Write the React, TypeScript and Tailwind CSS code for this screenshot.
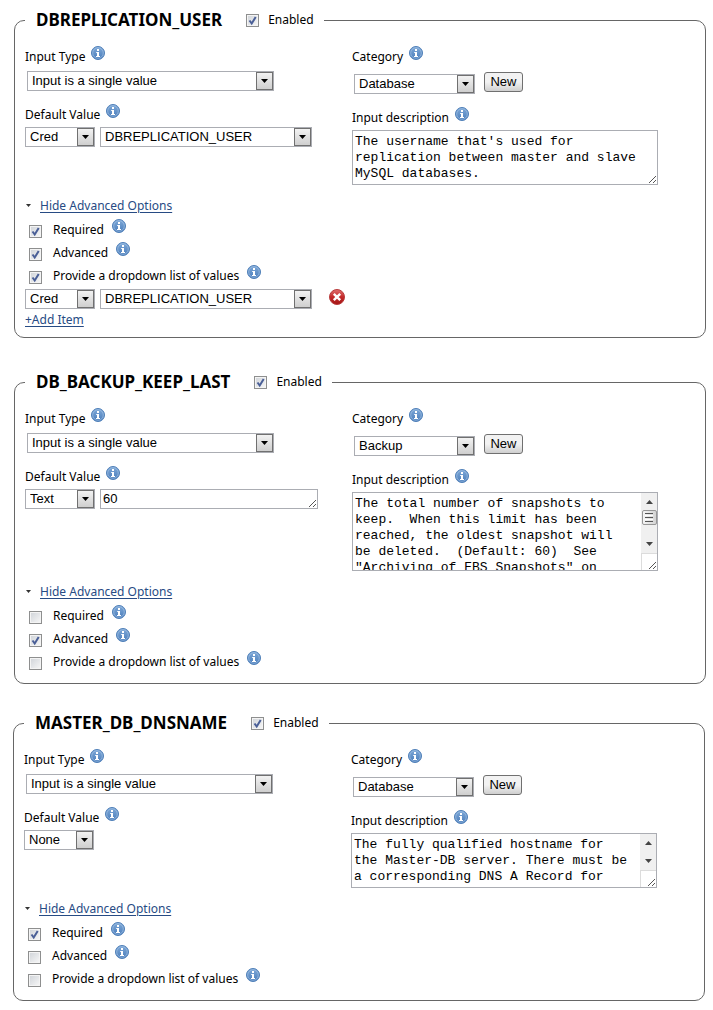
import { useId, type ReactNode } from "react";

type ValueKind = "Cred" | "Text" | "None";

type InputConfig = {
  name: string;
  category: string;
  kind: ValueKind;
  value: string;
  description: string;
  required: boolean;
  advanced: boolean;
  dropdown: boolean;
  scroll: "none" | "thumb" | "arrows";
};

const INPUTS: InputConfig[] = [
  {
    name: "DBREPLICATION_USER",
    category: "Database",
    kind: "Cred",
    value: "DBREPLICATION_USER",
    description: "The username that's used for\nreplication between master and slave\nMySQL databases.",
    required: true,
    advanced: true,
    dropdown: true,
    scroll: "none",
  },
  {
    name: "DB_BACKUP_KEEP_LAST",
    category: "Backup",
    kind: "Text",
    value: "60",
    description:
      'The total number of snapshots to\nkeep.  When this limit has been\nreached, the oldest snapshot will\nbe deleted.  (Default: 60)  See\n"Archiving of EBS Snapshots" on',
    required: false,
    advanced: true,
    dropdown: false,
    scroll: "thumb",
  },
  {
    name: "MASTER_DB_DNSNAME",
    category: "Database",
    kind: "None",
    value: "",
    description: "The fully qualified hostname for\nthe Master-DB server. There must be\na corresponding DNS A Record for",
    required: true,
    advanced: false,
    dropdown: false,
    scroll: "arrows",
  },
];

function InfoIcon() {
  return (
    <svg className="size-[14px] shrink-0" viewBox="0 0 14 14" aria-hidden="true">
      <defs>
        <linearGradient id="info-fill" x1="0" y1="0" x2="0" y2="1">
          <stop offset="0" stopColor="#7fa9d8" />
          <stop offset="1" stopColor="#4a7dbb" />
        </linearGradient>
      </defs>
      <circle cx="7" cy="7" r="6.5" fill="url(#info-fill)" stroke="#4f7fb8" />
      <circle cx="7" cy="7" r="5.3" fill="none" stroke="#a9c6e6" strokeWidth="0.6" />
      <path d="M6 3h2v2H6zM5.2 6H8v4h1v1H5v-1h1V7h-.8z" fill="#fff" />
    </svg>
  );
}

function RemoveIcon() {
  return (
    <svg className="size-4" viewBox="0 0 16 16" aria-hidden="true">
      <defs>
        <linearGradient id="remove-fill" x1="0" y1="0" x2="0" y2="1">
          <stop offset="0" stopColor="#e07070" />
          <stop offset="0.5" stopColor="#c42a2a" />
          <stop offset="1" stopColor="#a31515" />
        </linearGradient>
      </defs>
      <circle cx="8" cy="8" r="7.5" fill="url(#remove-fill)" stroke="#b83c3c" />
      <path d="M4.8 4.8l6.4 6.4M11.2 4.8l-6.4 6.4" stroke="#fff" strokeWidth="2.4" />
    </svg>
  );
}

function Grip() {
  return (
    <svg className="pointer-events-none absolute right-[2px] bottom-[2px] size-[7px]" viewBox="0 0 7 7" aria-hidden="true">
      <path
        d="M0 6h1v1H0zM1 5h1v1H1zM2 4h1v1H2zM3 3h1v1H3zM4 2h1v1H4zM5 1h1v1H5zM6 0h1v1H6zM4 6h1v1H4zM5 5h1v1H5zM6 4h1v1H6z"
        fill="#555"
      />
    </svg>
  );
}

function Select({ label, value, options, className }: { label: string; value: string; options: string[]; className: string }) {
  return (
    <div className={`relative h-5 ${className}`}>
      <select
        aria-label={label}
        defaultValue={value}
        className="block h-5 w-full appearance-none border border-[#abadb3] bg-white pl-1 font-['Liberation_Sans',sans-serif] text-[13px] leading-[18px] text-black"
      >
        {options.map((option) => (
          <option key={option}>{option}</option>
        ))}
      </select>
      <span className="pointer-events-none absolute top-px right-px flex h-[18px] w-[17px] items-center justify-center border border-[#707070] bg-linear-to-b from-[#f2f2f2] to-[#cfcfcf]">
        <svg className="h-1 w-[7px]" viewBox="0 0 7 4" aria-hidden="true">
          <path d="M0 0h7L3.5 4z" fill="#000" />
        </svg>
      </span>
    </div>
  );
}

function Checkbox({ id, checked }: { id: string; checked: boolean }) {
  return (
    <span className="relative block size-[13px] shrink-0">
      <input
        id={id}
        type="checkbox"
        defaultChecked={checked}
        className="peer block size-[13px] appearance-none border border-[#8e8f8f] bg-linear-to-br from-[#cfd3d8] to-[#f8f8f8] shadow-[inset_0_0_0_1px_#f4f4f4]"
      />
      <svg className="pointer-events-none absolute inset-0 hidden size-[13px] peer-checked:block" viewBox="0 0 13 13" aria-hidden="true">
        <path d="M3.5 6.5L5.7 9.5L9.7 3" stroke="#4a5f97" strokeWidth="2" fill="none" />
      </svg>
    </span>
  );
}

function FieldLabel({ htmlFor, children }: { htmlFor?: string; children: ReactNode }) {
  return (
    <div className="flex h-5 items-start gap-[6px]">
      <label htmlFor={htmlFor} className="leading-[22px]">
        {children}
      </label>
      <InfoIcon />
    </div>
  );
}

function OptionRow({ label, checked }: { label: string; checked: boolean }) {
  const id = useId();
  return (
    <li className="flex h-5 items-start pl-1">
      <span className="mr-[11px] pt-[6px]">
        <Checkbox id={id} checked={checked} />
      </span>
      <label htmlFor={id} className="mr-2 leading-[22px]">
        {label}
      </label>
      <InfoIcon />
    </li>
  );
}

function ScrollBar({ thumb }: { thumb: boolean }) {
  return (
    <div className="pointer-events-none absolute inset-y-px right-px flex w-4 flex-col bg-white" aria-hidden="true">
      <div className="flex flex-1 flex-col items-center justify-between border-b border-[#dcdcdc] bg-[#f0f0f0] py-[7px]">
        <svg className="h-1 w-[7px]" viewBox="0 0 7 4">
          <path d="M0 4h7L3.5 0z" fill="#444" />
        </svg>
        {thumb && (
          <span className="mb-3 flex h-[15px] w-[15px] flex-col items-center justify-center gap-px rounded-[2px] border border-[#979797] bg-linear-to-r from-[#f5f5f5] to-[#d4d4d4]">
            <span className="h-px w-2 bg-[#555]" />
            <span className="h-px w-2 bg-white" />
            <span className="h-px w-2 bg-[#555]" />
            <span className="h-px w-2 bg-white" />
            <span className="h-px w-2 bg-[#555]" />
          </span>
        )}
        <svg className="h-1 w-[7px]" viewBox="0 0 7 4">
          <path d="M0 0h7L3.5 4z" fill="#444" />
        </svg>
      </div>
      <div className="h-4 border-l border-[#dcdcdc]" />
    </div>
  );
}

function ValueFields({ label, kind, value }: { label: string; kind: ValueKind; value: string }) {
  return (
    <div className="flex gap-[5px]">
      <Select label={`${label} type`} value={kind} options={["None", "Text", "Cred"]} className="w-[70px]" />
      {kind === "Cred" && <Select label={label} value={value} options={[value]} className="w-[212px]" />}
      {kind === "Text" && (
        <div className="relative h-5 w-[218px]">
          <textarea
            aria-label={label}
            defaultValue={value}
            className="block h-5 w-full resize-none overflow-hidden border border-[#abadb3] px-[2px] font-['Liberation_Sans',sans-serif] text-[13px] leading-[18px]"
          />
          <Grip />
        </div>
      )}
    </div>
  );
}

function InputPanel({ input }: { input: InputConfig }) {
  const id = useId();
  return (
    <fieldset className="min-w-0 rounded-[10px] border border-[#666] px-[10px] pb-2">
      <legend className="flex h-6 items-center pr-[10px] pl-[11px]">
        <h2 className="text-[17px] leading-6 font-bold">{input.name}</h2>
        <span className="mr-[9px] ml-6">
          <Checkbox id={`${id}-enabled`} checked />
        </span>
        <label htmlFor={`${id}-enabled`} className="leading-5">
          Enabled
        </label>
      </legend>

      <div className="grid grid-cols-[327px_1fr] pt-[14px]">
        <div>
          <FieldLabel>Input Type</FieldLabel>
          <div className="mt-[5px] mb-[13px] pl-[2px]">
            <Select label="Input Type" value="Input is a single value" options={["Input is a single value", "Input is an array"]} className="w-[247px]" />
          </div>
          <FieldLabel>Default Value</FieldLabel>
          <div className="mt-[3px]">
            <ValueFields label="Default Value" kind={input.kind} value={input.value} />
          </div>
        </div>

        <div>
          <FieldLabel>Category</FieldLabel>
          <div className="mt-[6px] mb-[13px] flex items-start pl-[2px]">
            <div className="pt-[2px]">
              <Select label="Category" value={input.category} options={["Database", "Backup"]} className="w-[121px]" />
            </div>
            <button
              type="button"
              className="ml-[9px] h-5 w-[39px] rounded-[3px] border border-[#707070] bg-linear-to-b from-[#f2f2f2] from-50% to-[#cfcfcf] to-100% font-['Liberation_Sans',sans-serif] text-[13px] leading-[18px]"
            >
              New
            </button>
          </div>
          <FieldLabel htmlFor={`${id}-description`}>Input description</FieldLabel>
          <div className="relative mt-[3px] max-w-[306px]">
            <textarea
              id={`${id}-description`}
              defaultValue={input.description}
              className={`block w-full resize-none overflow-hidden border border-[#abadb3] px-[2px] pt-[3px] font-['Liberation_Mono',monospace] text-[13px] leading-4 whitespace-pre ${
                input.scroll === "thumb" ? "h-[79px]" : "h-[55px]"
              }`}
            />
            {input.scroll !== "none" && <ScrollBar thumb={input.scroll === "thumb"} />}
            <Grip />
          </div>
        </div>
      </div>

      <div className="mt-[10px] mb-1 flex h-5 items-center">
        <svg className="mr-[9px] ml-[1px] h-[3px] w-[5px]" viewBox="0 0 5 3" aria-hidden="true">
          <path d="M0 0h5L2.5 3z" fill="#333" />
        </svg>
        <a href="#advanced" className="pt-[2px] leading-5 text-[#274b84] underline underline-offset-2">
          Hide Advanced Options
        </a>
      </div>

      <ul className="mb-1 flex flex-col gap-[3px]">
        <OptionRow label="Required" checked={input.required} />
        <OptionRow label="Advanced" checked={input.advanced} />
        <OptionRow label="Provide a dropdown list of values" checked={input.dropdown} />
      </ul>

      {input.dropdown && (
        <div>
          <div className="flex h-5 gap-[17px]">
            <ValueFields label="Dropdown item" kind={input.kind} value={input.value} />
            <button type="button" aria-label="Remove item" className="size-4">
              <RemoveIcon />
            </button>
          </div>
          <a href="#add-item" className="block h-5 w-fit leading-[22px] text-[#274b84] underline underline-offset-2">
            +Add Item
          </a>
        </div>
      )}
    </fieldset>
  );
}

export default function App() {
  const [replication, backup, master] = INPUTS;
  return (
    <main className="bg-white pt-2 pr-[7px] pb-2 pl-[13px] font-['Noto_Sans',sans-serif] text-[12px] text-black">
      <div className="flex flex-col gap-8 pl-px">
        <InputPanel input={replication} />
        <InputPanel input={backup} />
      </div>
      <div className="mt-[27px] pr-px">
        <InputPanel input={master} />
      </div>
    </main>
  );
}
